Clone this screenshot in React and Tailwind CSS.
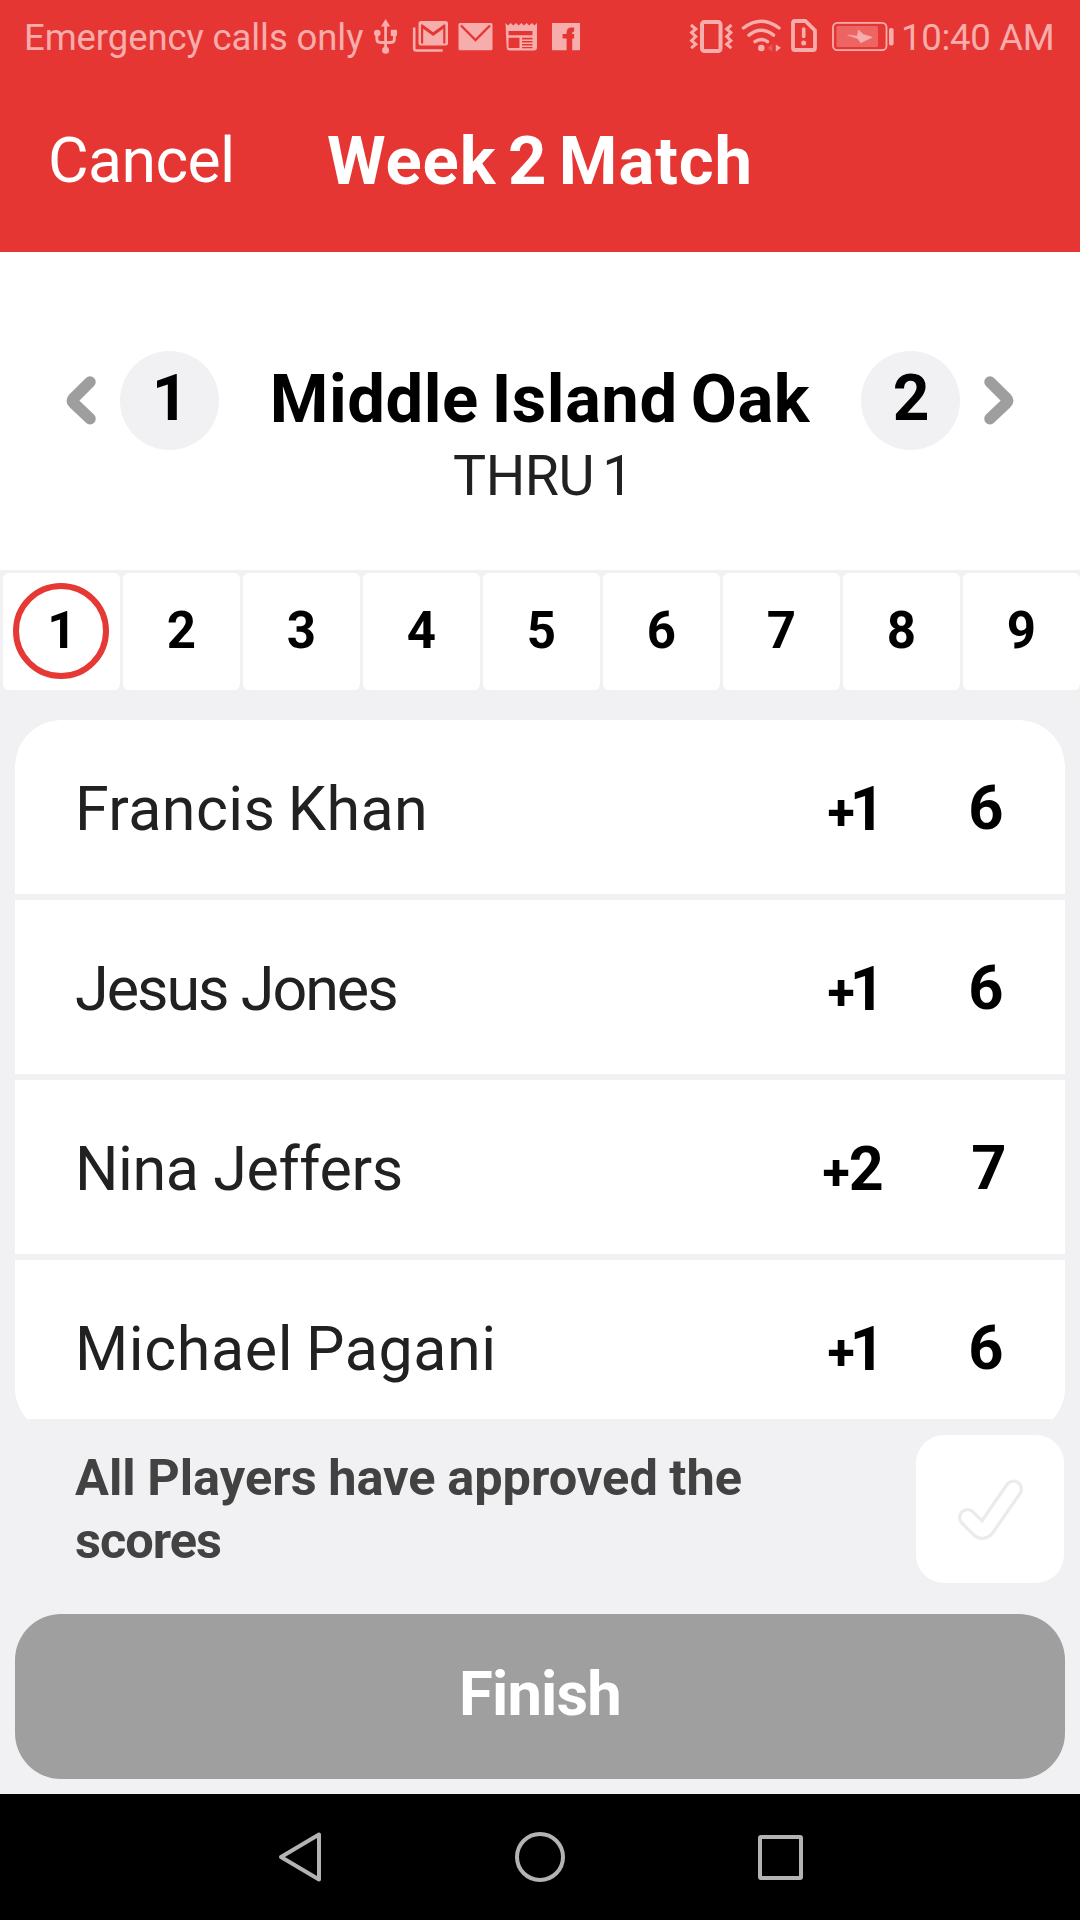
const HOLES = [1, 2, 3, 4, 5, 6, 7, 8, 9];

const PLAYERS = [
  { name: "Francis Khan", over: 1, score: 6, spacing: "tracking-[0.4px] [word-spacing:-3px]" },
  { name: "Jesus Jones", over: 1, score: 6, spacing: "tracking-[-2px]" },
  { name: "Nina Jeffers", over: 2, score: 7, spacing: "tracking-[-0.4px]" },
  { name: "Michael Pagani", over: 1, score: 6, spacing: "tracking-[0.6px] [word-spacing:-3px]" },
];

function StatusLeftIcons() {
  return (
    <svg className="h-[75px] w-[216px] shrink-0" viewBox="370 0 216 75" fill="currentColor">
      {/* usb */}
      <path d="M385.6 19l4.6 7.5h-9.2z" />
      <path d="M385.6 25v27M376.8 35v4q0 3.500 3.500 3.500h10.600q3.500 0 3.500-3.500v-4" fill="none" stroke="currentColor" strokeWidth="2.800" />
      <circle cx="377.300" cy="33" r="3.300" />
      <rect x="390.800" y="29.800" width="6.200" height="6.200" rx="1" />
      <circle cx="385.600" cy="50.200" r="3.500" />
      {/* stacked mail */}
      <path d="M414.200 27.500v21q0 2 2 2h26.500" fill="none" stroke="currentColor" strokeWidth="2.600" />
      <path fillRule="evenodd" d="M421 21h24.500q2.500 0 2.500 2.500v19.500q0 2.500-2.500 2.500H421q-2.500 0-2.500-2.500V23.500q0-2.500 2.500-2.500zM421 24.500V43.500h2.200V28.800l10 7.200 10-7.200V43.500h2.200V24.500h-1.500l-10.700 7.800-10.700-7.800z" />
      {/* mail */}
      <rect x="458.500" y="23" width="34" height="27.300" rx="1.500" />
      <path d="M461 25.500l14.500 14.500L490 25.500" fill="none" stroke="#e63633" strokeWidth="2.300" />
      {/* news */}
      <path fillRule="evenodd" d="M505.500 23l2.600 2.500 2.600-2.500 2.700 2.500 2.600-2.500 2.700 2.500 2.600-2.500 2.600 2.500 2.700-2.500 2.600 2.500 2.700-2.500 2.600 2.500 2.500-2.500V48q0 2.400-2.400 2.400h-25.500q-2.400 0-2.400-2.400zM508.500 31v4.200h24V31zM508.500 37.700V48h11V37.700zM522 37.700v1.700h10.500v-1.700zM522 41v1.600h10.500V41zM522 44v1.500h10.500V44zM522 47v1.300h10.500V47z" />
      {/* facebook */}
      <path fillRule="evenodd" d="M552 23h28v27.300h-7.800V38.500h1.900V34h-1.900v-1q0-1.500 1.500-1.500h.4v-4h-2.600q-4.900 0-4.900 5.200V34h-4v4.500h4v11.800H552z" />
    </svg>
  );
}

function StatusRightIcons() {
  return (
    <svg className="h-[75px] w-[210px] shrink-0" viewBox="688 0 210 75" fill="none" stroke="currentColor">
      {/* vibrate */}
      <rect x="702" y="22" width="18.500" height="29" rx="2.500" strokeWidth="4" />
      <path d="M691 25l4.800 4-4.200 3.600 4.200 4-4.200 4 4.200 3.600-4.600 4M731.500 25l-4.800 4 4.200 3.600-4.200 4 4.200 4-4.200 3.600 4.600 4" strokeWidth="3" />
      {/* wifi */}
      <path d="M743.500 28q17.800-13.500 35.500 0M749 35.200q12.200-9.800 24.500 0M755 41.700q6.200-4.500 12.500 0" strokeWidth="3.400" strokeLinecap="round" />
      <circle cx="761.300" cy="48" r="3.300" fill="currentColor" stroke="none" />
      <path d="M775.800 44.500v7.200l5.200-4z" fill="currentColor" stroke="none" />
      <path d="M772.400 44.300v7.400l-4.800-3.700z" fill="currentColor" stroke="none" opacity="0.3" />
      {/* sim alert */}
      <path d="M795 21h10.500l9.500 9.500V48q0 2-2 2h-18q-2 0-2-2V23q0-2 2-2z" strokeWidth="3.800" strokeLinejoin="round" />
      <path d="M803.700 29v7.500" strokeWidth="3.600" strokeLinecap="round" />
      <circle cx="803.700" cy="43" r="2.500" fill="currentColor" stroke="none" />
      {/* battery */}
      <rect x="833" y="22.800" width="53.500" height="27.400" rx="4.500" strokeWidth="1.800" />
      <rect x="836.500" y="26" width="41.500" height="21" rx="1.500" fill="currentColor" stroke="none" opacity="0.4" />
      <path d="M847.700 35l9.500 1.200L858.500 30l4.800 4.500 9 2.800-11.600 5.500-3-4.300z" fill="currentColor" stroke="currentColor" strokeWidth="0.600" />
      <rect x="889" y="28" width="4.600" height="17.500" rx="1.800" fill="currentColor" stroke="none" />
    </svg>
  );
}

function Chevron({ flip }) {
  return (
    <svg
      className={flip ? "h-[49px] w-[30px] shrink-0 -scale-x-100" : "h-[49px] w-[30px] shrink-0"}
      viewBox="0 0 30 49"
      fill="none"
      stroke="#9e9e9e"
      strokeWidth="11.500"
      strokeLinecap="round"
      strokeLinejoin="round"
    >
      <path d="M24 6L7.500 22.300Q5 24.700 7.500 27L24 42.700" />
    </svg>
  );
}

function HoleBadge({ children }) {
  return (
    <div className="flex size-[99px] shrink-0 items-center justify-center rounded-full bg-[#f1f1f3] pb-[3px] pl-px text-[64px] leading-none font-bold">
      {children}
    </div>
  );
}

export default function App() {
  return (
    <div className="flex h-[1920px] w-[1080px] flex-col overflow-hidden bg-[#f1f1f3] font-[Roboto,sans-serif] text-black">
      <header className="h-[252px] bg-[#e63633] text-white">
        <div className="flex h-[75px] items-center pr-[26px] pl-[24px] text-[36.5px] leading-none text-[#f7adac]">
          <div className="w-[346px] pt-[2px] tracking-[-0.100px] whitespace-nowrap">Emergency calls only</div>
          <StatusLeftIcons />
          <div className="flex-1" />
          <StatusRightIcons />
          <div className="ml-[3px] w-[153px] pt-[2px] text-right tracking-[-0.300px] whitespace-nowrap">10:40 AM</div>
        </div>
        <div className="grid h-[173px] grid-cols-[300px_1fr_300px] items-center">
          <div className="pl-[48px] text-[62.500px] leading-none tracking-[-0.600px]">Cancel</div>
          <h1 className="text-center text-[67px] leading-none font-bold tracking-[0.900px] whitespace-nowrap [word-spacing:-6px]">
            Week 2 Match
          </h1>
        </div>
      </header>

      <section className="flex h-[318px] flex-col bg-white px-[66px] pt-[99px]">
        <div className="flex h-[99px] items-center">
          <Chevron />
          <div className="ml-[24px]">
            <HoleBadge>1</HoleBadge>
          </div>
          <h2 className="flex-1 pb-[2px] text-center text-[67px] leading-none font-bold tracking-[0.500px] whitespace-nowrap [word-spacing:-4px]">
            Middle Island Oak
          </h2>
          <div className="mr-[24px]">
            <HoleBadge>2</HoleBadge>
          </div>
          <Chevron flip />
        </div>
        <div className="pt-px pl-[6px] text-center text-[55.5px] leading-[52px] tracking-[-0.500px] text-[#212121] [word-spacing:-5px]">
          THRU 1
        </div>
      </section>

      <nav className="grid h-[120px] shrink-0 grid-cols-9 gap-[3px] pt-[3px] pl-[3px]">
        {HOLES.map((n) => (
          <div
            key={n}
            className={
              n === 1
                ? "flex items-center justify-center rounded-[6px] bg-white pr-px pb-px"
                : "flex items-center justify-center rounded-[6px] bg-white"
            }
          >
            <div
              className={
                n === 1
                  ? "flex size-[96px] items-center justify-center rounded-full border-[6px] border-[#e53935] pb-[2px] pl-[2px] text-[51px] leading-none font-bold"
                  : "pb-[3px] text-[51px] leading-none font-bold"
              }
            >
              {n}
            </div>
          </div>
        ))}
      </nav>

      <main className="mx-[15px] mt-[30px] h-[699px] shrink-0 overflow-hidden rounded-t-[46px]">
        <div className="flex flex-col gap-[6px] overflow-hidden rounded-[46px]">
          {PLAYERS.map((p) => (
            <div key={p.name} className="flex h-[174px] items-center bg-white pl-[60px] text-[61px] leading-none">
              <div className={`flex-1 pt-[5px] text-[#212121] ${p.spacing}`}>{p.name}</div>
              <div className="mr-[11px] flex w-[120px] items-baseline justify-center pt-[4px] font-bold">
                <span className={p.over === 1 ? "text-[50px] tracking-[-5px]" : "-ml-[6px] text-[50px] tracking-[-1px]"}>+</span>
                {p.over}
              </div>
              <div
                className={
                  p.score === 7
                    ? "mr-[17px] w-[121px] pt-[4px] pl-[3px] text-center text-[61.500px] font-bold"
                    : "mr-[20px] w-[118px] pt-[4px] text-center text-[61.500px] font-bold"
                }
              >
                {p.score}
              </div>
            </div>
          ))}
        </div>
      </main>

      <section className="flex h-[179px] shrink-0 items-center justify-between pr-[16px] pl-[75px]">
        <p className="w-[700px] text-[50.500px] leading-[63px] font-bold text-[#424242] [word-spacing:-1px]">
          All Players have approved the <span className="tracking-[-1px]">scores</span>
        </p>
        <div className="flex size-[148px] items-center justify-center rounded-[28px] bg-white pt-[4px]">
          <svg className="h-[66px] w-[66px]" viewBox="0 0 66 66" fill="none" strokeLinecap="round" strokeLinejoin="round">
            <path d="M10.500 39.500L22 51Q26 54.500 29.500 50L56.500 11" stroke="#ebebeb" strokeWidth="19" />
            <path d="M10.500 39.500L22 51Q26 54.500 29.500 50L56.500 11" stroke="#ffffff" strokeWidth="12.500" />
          </svg>
        </div>
      </section>

      <button className="mx-[15px] mt-[16px] h-[165px] shrink-0 rounded-[46px] bg-[#9f9f9f] pb-[3px] text-[61.500px] leading-none font-bold tracking-[-0.800px] text-white">
        Finish
      </button>

      <footer className="mt-auto flex h-[126px] shrink-0 justify-center bg-black text-[#b3b3b3]">
        <div className="flex w-[240px] items-center justify-center">
          <svg className="h-[52px] w-[44px]" viewBox="0 0 44 52" fill="none" stroke="currentColor" strokeWidth="4" strokeLinejoin="round">
            <path d="M41 3.500V48.500L3 26z" />
          </svg>
        </div>
        <div className="flex w-[240px] items-center justify-center">
          <div className="size-[50px] rounded-full border-4 border-[#b3b3b3]" />
        </div>
        <div className="flex w-[240px] items-center justify-center">
          <div className="size-[45px] rounded-[3px] border-4 border-[#b3b3b3]" />
        </div>
      </footer>
    </div>
  );
}
